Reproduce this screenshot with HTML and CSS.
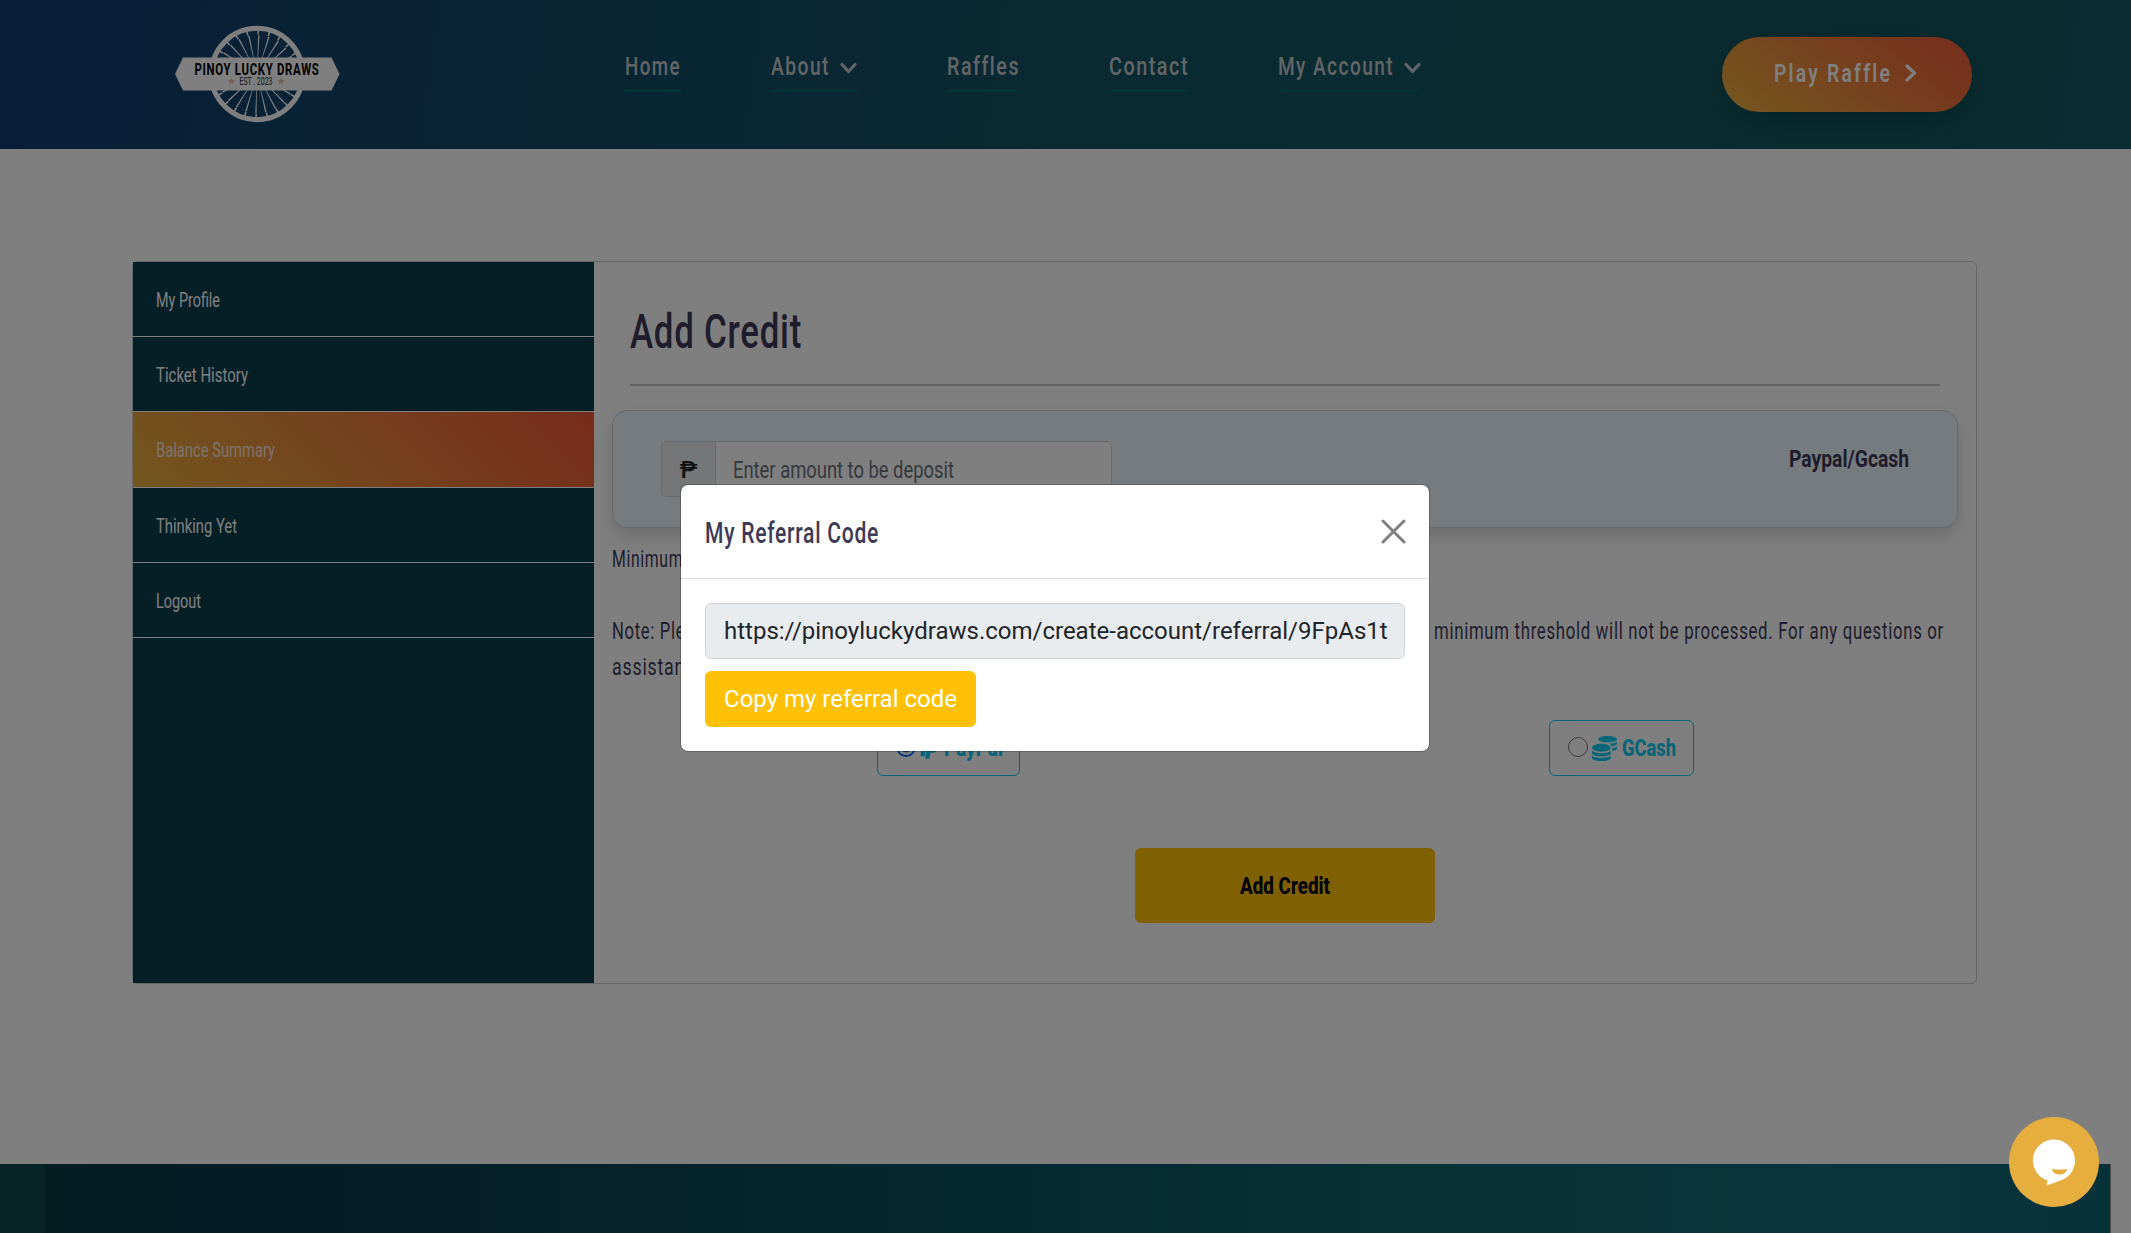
FILE: index.html
```html
<!DOCTYPE html>
<html lang="en">
<head>
<meta charset="utf-8">
<title>Pinoy Lucky Draws - Add Credit</title>
<link rel="stylesheet" href="styles.css">
</head>
<body>
<div class="page">
  <header class="header">
    <svg class="logo" width="166" height="100" viewBox="174 24 166 100">
      <circle class="rim" cx="257" cy="74" r="45.7"/>
      <g class="spokes">
        <circle class="spoke-ring" cx="257" cy="74" r="24"/>
        <circle class="tick-ring" cx="257" cy="74" r="42"/>
      </g>
      <path class="band" d="M183 57.5H331.500L339.500 74 331.500 90.500H183L175 74Z"/>
      <text class="brand" x="194.500" y="75" textLength="125" lengthAdjust="spacingAndGlyphs">PINOY LUCKY DRAWS</text>
      <text class="est" x="239.500" y="85" textLength="33" lengthAdjust="spacingAndGlyphs">EST . 2023</text>
      <path class="star" d="M231.500 77.500l1.100 2.400 2.600.2-2 1.700.7 2.600-2.400-1.400-2.400 1.400.7-2.600-2-1.700 2.600-.2zM281 77.500l1.100 2.400 2.600.2-2 1.700.7 2.600-2.400-1.400-2.400 1.400.7-2.600-2-1.700 2.600-.2z"/>
    </svg>
    <nav class="nav">
      <a class="nav-item"><svg class="ct" width="57" height="36"><text x="1" y="22" textLength="56" lengthAdjust="spacingAndGlyphs">Home</text></svg></a>
      <a class="nav-item"><svg class="ct" width="58" height="36"><text y="22" textLength="59" lengthAdjust="spacingAndGlyphs">About</text></svg><svg class="chev" width="17" height="12"><path d="M2 2.500l6.500 7 6.500-7"/></svg></a>
      <a class="nav-item"><svg class="ct" width="72" height="36"><text y="22" textLength="73" lengthAdjust="spacingAndGlyphs">Raffles</text></svg></a>
      <a class="nav-item"><svg class="ct" width="79" height="36"><text y="22" textLength="80" lengthAdjust="spacingAndGlyphs">Contact</text></svg></a>
      <a class="nav-item"><svg class="ct" width="115" height="36"><text y="22" textLength="116" lengthAdjust="spacingAndGlyphs">My Account</text></svg><svg class="chev" width="17" height="12"><path d="M2 2.500l6.500 7 6.500-7"/></svg></a>
    </nav>
    <a class="play"><svg class="ct" width="115" height="36"><text x="-1" y="27" textLength="118" lengthAdjust="spacingAndGlyphs">Play Raffle</text></svg><svg class="chev" width="12" height="18"><path d="M2 2l7.500 7-7.500 7"/></svg></a>
  </header>

  <main class="card">
    <aside class="sidebar">
      <a class="side-item"><svg class="ct" width="64" height="30"><text y="21" textLength="64" lengthAdjust="spacingAndGlyphs">My Profile</text></svg></a>
      <a class="side-item"><svg class="ct" width="92" height="30"><text y="21" textLength="92" lengthAdjust="spacingAndGlyphs">Ticket History</text></svg></a>
      <a class="side-item active"><svg class="ct" width="119" height="30"><text y="21" textLength="119" lengthAdjust="spacingAndGlyphs">Balance Summary</text></svg></a>
      <a class="side-item"><svg class="ct" width="81" height="30"><text y="20.500" textLength="81" lengthAdjust="spacingAndGlyphs">Thinking Yet</text></svg></a>
      <a class="side-item"><svg class="ct" width="45" height="30"><text y="21" textLength="45" lengthAdjust="spacingAndGlyphs">Logout</text></svg></a>
    </aside>
    <section class="content">
      <h1 class="title"><svg class="ct" width="172" height="56"><text y="41.500" textLength="172" lengthAdjust="spacingAndGlyphs">Add Credit</text></svg></h1>
      <div class="panel">
        <div class="amount">
          <span class="peso">₱</span>
          <span class="field"><svg class="ct" width="222" height="36"><text y="26" textLength="221" lengthAdjust="spacingAndGlyphs">Enter amount to be deposit</text></svg></span>
        </div>
        <svg class="ct method" width="120" height="36"><text x="-1" y="26" textLength="120" lengthAdjust="spacingAndGlyphs">Paypal/Gcash</text></svg>
      </div>
      <p class="note"><svg class="ct" width="300" height="36"><text y="26" textLength="233" lengthAdjust="spacingAndGlyphs">Minimum deposit amount: 100</text></svg></p>
      <p class="note">
        <svg class="ct" width="1333" height="36"><text y="26" textLength="815" lengthAdjust="spacingAndGlyphs">Note: Please ensure that your deposit meets the minimum amount required. Deposits made below the</text><text x="822" y="26" textLength="510" lengthAdjust="spacingAndGlyphs">minimum threshold will not be processed. For any questions or</text></svg>
        <svg class="ct" width="500" height="36"><text y="26" textLength="390" lengthAdjust="spacingAndGlyphs">assistance, please contact our support team.</text></svg>
      </p>
      <div class="options">
        <label class="option paypal"><span class="radio checked"></span>
          <svg class="pp" width="19" height="24" viewBox="0 0 384 512"><path d="M111.400 295.900c-3.500 19.200-17.400 108.700-21.500 134-.3 1.800-1 2.500-3 2.500H12.300c-7.600 0-13.100-6.600-12.100-13.900L58.800 46.600c1.500-9.600 10.100-16.900 20-16.900 152.300 0 165.100-3.700 204 11.400 60.100 23.300 65.600 79.500 44 140.300-21.500 62.600-72.500 89.500-140.100 90.300-43.400.7-69.500-7-75.300 24.200zM357.100 152c-1.800-1.300-2.500-1.800-3 1.300-2 11.400-5.100 22.500-8.800 33.600-39.900 113.800-150.500 103.900-204.500 103.900-6.100 0-10.100 3.300-10.900 9.400-22.600 140.400-27.100 169.700-27.100 169.700-1 7.100 3.500 12.900 10.600 12.900h63.500c8.600 0 15.700-6.300 17.400-14.900.7-5.400-1.100 6.100 14.400-91.300 4.600-22 14.300-19.700 29.300-19.700 71 0 126.400-28.800 142.900-112.300 6.500-34.800 4.600-71.400-23.800-92.600z"/></svg>
          <svg class="ct" width="59" height="36"><text y="26" textLength="59" lengthAdjust="spacingAndGlyphs">PayPal</text></svg></label>
        <label class="option gcash"><span class="radio"></span>
          <svg class="coins" width="25" height="25" viewBox="0 0 512 512"><path d="M0 405.300V448c0 35.300 86 64 192 64s192-28.700 192-64v-42.700C342.700 434.400 267.200 448 192 448S41.300 434.400 0 405.300zM320 128c106 0 192-28.700 192-64S426 0 320 0 128 28.700 128 64s86 64 192 64zM0 300.400V352c0 35.300 86 64 192 64s192-28.700 192-64v-51.600c-41.300 34-116.900 51.600-192 51.600S41.300 334.400 0 300.400zm416 11c57.300-11.100 96-31.700 96-55.400v-42.700c-23.200 16.400-57.300 27.600-96 34.500v63.600zM192 160C86 160 0 195.800 0 240s86 80 192 80 192-35.800 192-80-86-80-192-80zm219.300 56.300c60-10.800 100.700-32 100.700-56.300v-42.700c-35.500 25.100-96.500 38.600-160.700 41.800 29.500 14.300 51.200 33.500 60 57.200z"/></svg>
          <svg class="ct" width="54" height="36"><text y="26" textLength="54" lengthAdjust="spacingAndGlyphs">GCash</text></svg></label>
      </div>
      <div class="submit"><svg class="ct" width="90" height="36"><text y="26" textLength="90" lengthAdjust="spacingAndGlyphs">Add Credit</text></svg></div>
    </section>
  </main>
  <footer class="footer"></footer>
</div>

<div class="backdrop">
  <div class="modal">
    <div class="modal-head">
      <svg class="ct" width="175" height="40"><text y="30.500" textLength="174" lengthAdjust="spacingAndGlyphs">My Referral Code</text></svg>
      <svg class="close" width="25" height="25"><path d="M2 2l21 21M23 2L2 23"/></svg>
    </div>
    <div class="modal-body">
      <div class="link">https://pinoyluckydraws.com/create-account/referral/9FpAs1t</div>
      <button class="copy">Copy my referral code</button>
    </div>
  </div>
</div>

<div class="chat">
  <svg width="90" height="90"><path class="bubble" d="M45 22.500a21 21 0 0 1 21 21c0 9-5 16-13 19.500L37.500 68.500 38.500 63.500A21 21 0 0 1 45 22.500z"/><path class="smile" d="M43 52q7.500 1 15 0a7.500 5.500 0 0 1-15 0z"/></svg>
</div>
</body>
</html>
```
FILE: styles.css
```css
* { box-sizing: border-box; }
html, body { height: 100%; }
body {
  margin: 0;
  overflow: hidden;
  background: #fff;
  font-family: Roboto, "Liberation Sans", sans-serif;
  font-size: 24px;
  line-height: 36px;
  color: #3e3a56;
}
.page { height: 1233px; display: flex; flex-direction: column; }
.ct { display: block; overflow: visible; fill: currentColor; flex: none; }

.header {
  height: 149px;
  flex: none;
  display: flex;
  align-items: flex-start;
  padding: 24px 159px 0 174px;
  background: linear-gradient(98deg, #103c70 0, #12466a 350px, #144f66 850px, #145862 1450px, #14585f 1900px, #145866 100%);
}
.logo { display: block; flex: none; overflow: visible; }
.rim { fill: none; stroke: #fff; stroke-width: 5; }
.spoke-ring { fill: none; stroke: #fff; stroke-width: 30; stroke-dasharray: 0.9 5.383; }
.tick-ring { fill: none; stroke: #fff; stroke-width: 5; stroke-dasharray: 1.6 9.4; }
.band { fill: #fff; }
.brand { font-size: 16.500px; font-weight: 700; letter-spacing: 1px; fill: #000; }
.est { font-size: 10px; fill: #222; }
.star { fill: #d8c8b0; }

.nav { display: flex; gap: 90px; margin: 29px 0 0 284px; color: #c4cacf; font-size: 26.500px; font-weight: 500; letter-spacing: 2px; }
.nav-item {
  height: 39px;
  display: flex;
  gap: 11px;
  border-bottom: 3px solid #0a6468;
}
.chev { fill: none; stroke: currentColor; stroke-width: 3.200; flex: none; stroke-linecap: round; stroke-linejoin: round; }
.nav .chev { margin-top: 9px; }
.play {
  width: 250px;
  height: 75px;
  margin: 13px 0 0 auto;
  padding: 18px 0 0 53px;
  display: flex;
  gap: 15px;
  border-radius: 38px;
  background: linear-gradient(38deg, #ebaf3e, #ee5a3a);
  box-shadow: 0 10px 40px rgba(0, 0, 0, .2);
  color: #fff;
  font-size: 26.500px;
  font-weight: 600;
  letter-spacing: 3px;
}
.play .chev { margin-top: 9px; }

.card {
  width: 1845px;
  height: 723px;
  margin: 112px 0 0 132px;
  flex: none;
  display: flex;
  border: 1px solid #cfcfcf;
  border-radius: 6px;
}
.sidebar { width: 461px; background: #0b3e4f; color: #fff; font-size: 19.500px; }
.side-item {
  height: 75.200px;
  display: flex;
  align-items: flex-start;
  padding: 24px 0 0 23px;
  border-bottom: 1px solid #fff;
}
.side-item.active { background: linear-gradient(45deg, #e6ae3e, #ee5735); color: #fbe6d6; }

.content { flex: 1; padding: 44px 18px 0; display: flex; flex-direction: column; }
.title {
  height: 80px;
  margin: 0 18px;
  border-bottom: 2px solid #c6c6ca;
  font-size: 48px;
  font-weight: 500;
  letter-spacing: 1px;
}
.panel {
  height: 118px;
  margin-top: 24px;
  padding: 30px 47px 30px 48px;
  display: flex;
  justify-content: space-between;
  border: 1px solid #cfd4d8;
  border-radius: 15px;
  background: #ebf6fe;
  box-shadow: 0 8px 16px rgba(0, 0, 0, .15);
}
.amount {
  width: 451px;
  height: 56px;
  display: flex;
  border: 1px solid #ced4da;
  border-radius: 6px;
  overflow: hidden;
  font-size: 23.500px;
}
.peso { width: 54px; background: #e9ecef; color: #212529; border-right: 1px solid #ced4da; text-align: center; font-size: 24px; font-weight: 500; line-height: 56px; }
.field { flex: 1; background: #fff; color: #6c757d; padding: 10px 0 0 17px; }
.method { font-size: 24px; font-weight: 700; }
.note { margin: 0 0 36px; font-size: 23.500px; letter-spacing: 1px; }
.panel + .note { margin-top: 13px; }
.options { height: 56px; margin-top: -1px; display: flex; }
.option {
  height: 56px;
  display: flex;
  align-items: center;
  padding-left: 18px;
  border: 1px solid #0dcaf0;
  border-radius: 6px;
  color: #0dcaf0;
  font-size: 24px;
  font-weight: 800;
}
.paypal { width: 143px; margin-left: 265px; }
.gcash { width: 145px; margin-left: 529px; }
.radio { width: 20px; height: 20px; border: 1.500px solid #767676; border-radius: 50%; margin-bottom: 2px; }
.radio.checked { border: 2px solid #0b6bf0; background: radial-gradient(#0b6bf0 0 5px, transparent 6px); }
.coins, .pp { fill: currentColor; margin: 0 5px 0 4px; }
.submit {
  width: 300px;
  height: 75px;
  margin: 72px 0 0 523px;
  padding: 20px 0 0 105px;
  background: #ffc107;
  border-radius: 6px;
  color: #000;
  font-size: 24px;
  font-weight: 800;
}
.footer {
  width: 2111px;
  height: 69px;
  margin-top: auto;
  border-right: 1px solid #999;
  background: linear-gradient(90deg, #0c464c 0 44px, #083a42 46px, #06384c 220px, #0a4454 650px, #0c5464 1050px, #10626c 1400px, #146a78 1820px, #106472 100%);
}

.backdrop {
  position: absolute;
  inset: 0;
  padding: 484px 0 0 680px;
  background: rgba(0, 0, 0, .5);
}
.modal {
  width: 750px;
  height: 268px;
  background: #fff;
  background-clip: padding-box;
  border: 1px solid rgba(0, 0, 0, .2);
  border-radius: 8px;
}
.modal-head {
  height: 94px;
  padding: 27px 23px 0 24px;
  display: flex;
  justify-content: space-between;
  border-bottom: 1px solid #dee2e6;
  font-size: 29.500px;
  font-weight: 500;
  letter-spacing: 1px;
}
.close { margin-top: 7px; stroke: #7f7f7f; stroke-width: 3; stroke-linecap: round; }
.modal-body { padding: 24px; display: flex; flex-direction: column; align-items: flex-start; gap: 12px; }
.link {
  width: 700px;
  height: 56px;
  padding: 9px 18px;
  background: #e9ecef;
  border: 1px solid #ced4da;
  border-radius: 6px;
  color: #212529;
  white-space: nowrap;
}
.copy {
  height: 56px;
  width: 271px;
  padding: 0;
  border: 0;
  border-radius: 6px;
  background: #ffc107;
  color: #fff;
  font: 24px/56px Roboto, "Liberation Sans", sans-serif;
}
.chat {
  position: absolute;
  left: 2009px;
  top: 1117px;
  width: 90px;
  height: 90px;
  border-radius: 50%;
  background: #e6ae3e;
}
.bubble { fill: #fff; }
.smile { fill: #e6ae3e; }
```
